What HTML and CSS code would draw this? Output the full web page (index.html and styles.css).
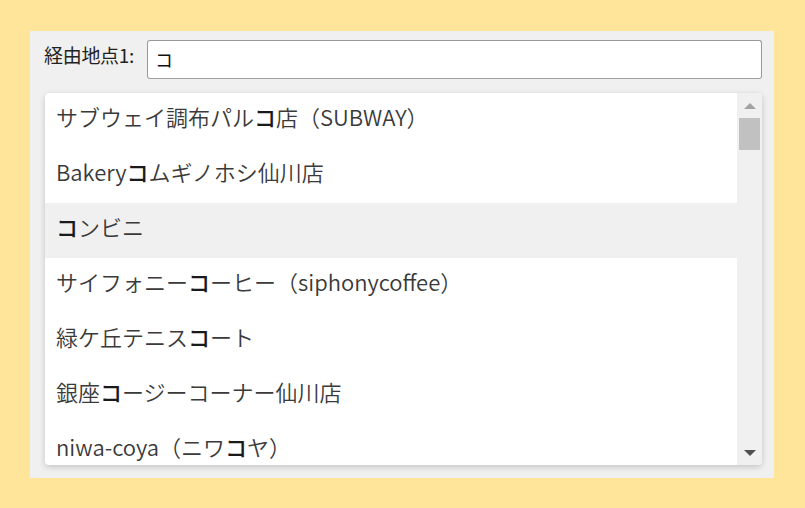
FILE: index.html
```html
<!DOCTYPE html>
<html lang="ja">
<head>
<meta charset="utf-8">
<link rel="stylesheet" href="styles.css">
</head>
<body>
<div class="panel">
  <div class="field">
    <label class="label">経由地点1:</label>
    <div class="input">コ</div>
  </div>
  <div class="dropdown">
    <ul class="list">
      <li class="item">サブウェイ調布パル<b>コ</b>店（SUBWAY）</li>
      <li class="item">Bakery<b>コ</b>ムギノホシ仙川店</li>
      <li class="item active"><b>コ</b>ンビニ</li>
      <li class="item">サイフォニー<b>コ</b>ーヒー（siphonycoffee）</li>
      <li class="item">緑ケ丘テニス<b>コ</b>ート</li>
      <li class="item">銀座<b>コ</b>ージーコーナー仙川店</li>
      <li class="item">niwa-coya（ニワ<b>コ</b>ヤ）</li>
    </ul>
    <div class="scrollbar">
      <div class="arrow up"></div>
      <div class="track"><div class="thumb"></div></div>
      <div class="arrow down"></div>
    </div>
  </div>
</div>
</body>
</html>
```
FILE: styles.css
```css
* { box-sizing: border-box; }
html, body { margin: 0; padding: 0; }
body {
  background: #ffe599;
  width: 805px;
  height: 508px;
  overflow: hidden;
  font-family: "Noto Sans CJK JP", "Open Sans", sans-serif;
  color: #333;
}
.panel {
  margin: 31px 0 0 30px;
  width: 744px;
  height: 447px;
  background: #f0f0f0;
  padding: 9px 12px 0 14px;
}
.field {
  display: flex;
  align-items: flex-start;
  height: 39px;
}
.label {
  font-size: 19px;
  line-height: 28px;
  color: #222;
  width: 103px;
  padding-top: 1px;
  letter-spacing: -0.3px;
}
.input {
  flex: 1;
  height: 39px;
  background: #fff;
  border: 1px solid #999;
  border-bottom-color: #a0a0a0;
  border-radius: 3px;
  font-size: 18px;
  line-height: 37px;
  padding-left: 7px;
  color: #111;
}
.dropdown {
  margin: 14px 0 0 1px;
  width: 717px;
  height: 372px;
  background: #fff;
  border-radius: 4px;
  box-shadow: 0 2px 6px rgba(0,0,0,0.18);
  display: flex;
  overflow: hidden;
}
.list {
  list-style: none;
  margin: 0;
  padding: 0;
  flex: 1;
  overflow: hidden;
}
.item {
  height: 55px;
  padding: 7px 0 16px 11px;
  font-size: 22px;
  line-height: 32px;
  white-space: nowrap;
  color: #3a3a3a;
  font-weight: 350;
}
.item b { color: #1a1a1a; font-weight: 500; }
.item.active { background: #f0f0f0; }
.scrollbar {
  width: 25px;
  background: #f0f0f0;
  display: flex;
  flex-direction: column;
}
.arrow {
  height: 24px;
  display: flex;
  align-items: center;
  justify-content: center;
}
.arrow::before {
  content: "";
  width: 0;
  height: 0;
  border-left: 6px solid transparent;
  border-right: 6px solid transparent;
}
.arrow.up::before { border-bottom: 6px solid #a3a3a3; margin-top: 1px; }
.arrow.down::before { border-top: 6px solid #505050; margin-top: 0; }
.track { flex: 1; padding: 1px 2px 0 2px; }
.thumb { height: 32px; background: #c1c1c1; }
```
